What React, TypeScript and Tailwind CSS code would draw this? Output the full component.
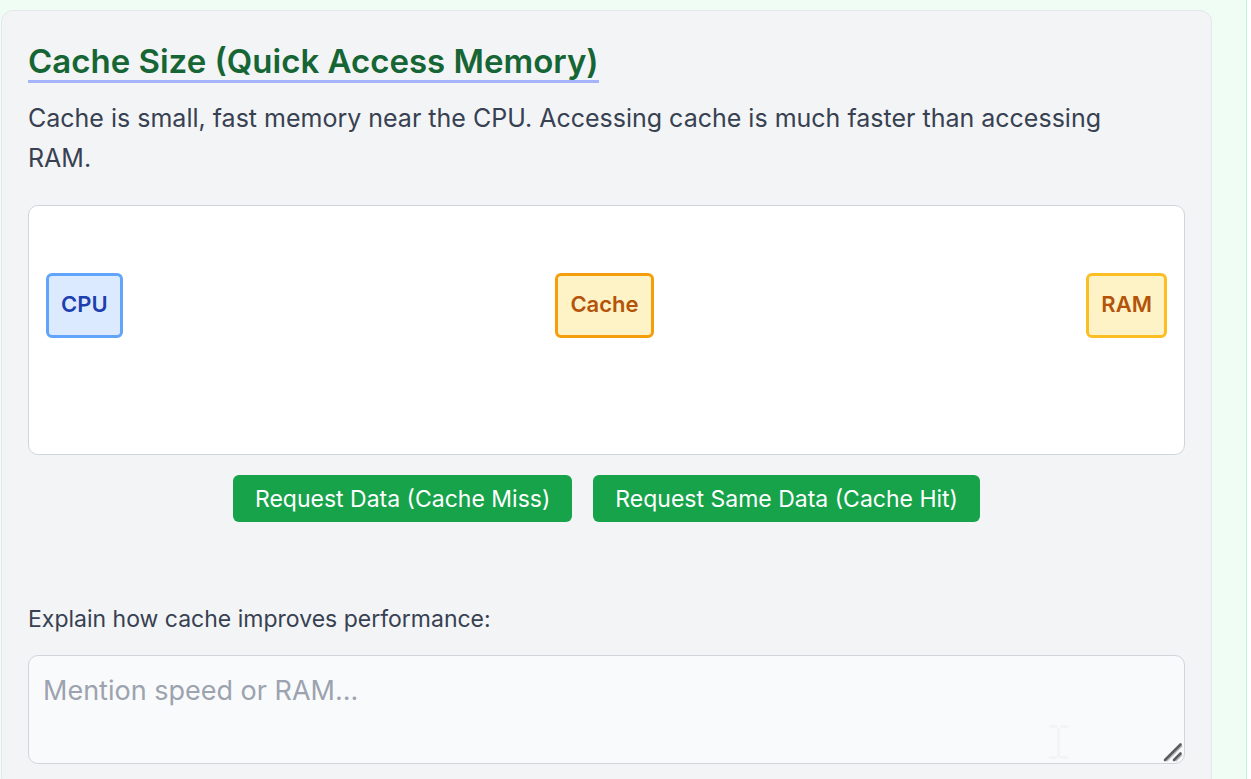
import { useState } from "react";

const boxClass = "flex h-[65px] items-center justify-center rounded-md border-3 px-3 pb-0.5 text-[22px] font-semibold";
const buttonClass = "h-[47px] rounded-md bg-[#16a34a] px-[22px] pt-px text-[23px] font-normal text-white hover:bg-[#15803d]";

export default function App() {
  const [answer, setAnswer] = useState("");
  return (
    <div className="flex h-screen overflow-hidden bg-[#f0fdf4] pl-px font-['Inter',sans-serif]">
      <main className="min-w-0 flex-1 pt-2.5 pr-[34px]">
        <section className="min-h-screen rounded-xl border border-[#e5e7eb] bg-[#f3f4f6] px-[26px] pt-8">
          <h2 className="inline-block border-b-3 border-[#a5b4fc] text-[33px] leading-[37px] font-semibold text-[#166534]">
            Cache Size (Quick Access Memory)
          </h2>
          <p className="mt-[15px] pr-8 text-[25px] leading-10 text-[#374151]">
            Cache is small, fast memory near the CPU. Accessing cache is much faster than accessing RAM.
          </p>
          <div className="mt-[27px] flex h-[250px] items-start justify-between rounded-[10px] border border-[#d1d5db] bg-white px-[17px] pt-[67px]">
            <div className={`${boxClass} border-[#60a5fa] bg-[#dbeafe] text-[#1e40af]`}>CPU</div>
            <div className={`${boxClass} border-[#f59e0b] bg-[#fef3c7] text-[#b45309]`}>Cache</div>
            <div className={`${boxClass} border-[#fbbf24] bg-[#fef3c7] text-[#b45309]`}>RAM</div>
          </div>
          <div className="mt-5 flex justify-center gap-[21px]">
            <button type="button" className={buttonClass}>Request Data (Cache Miss)</button>
            <button type="button" className={buttonClass}>Request Same Data (Cache Hit)</button>
          </div>
          <label htmlFor="answer" className="mt-[79px] block text-[23px] leading-9 text-[#374151]">
            Explain how cache improves performance:
          </label>
          <div className="relative mt-[18px]">
            <textarea
              id="answer"
              value={answer}
              onChange={(e) => setAnswer(e.target.value)}
              placeholder="Mention speed or RAM..."
              className="block h-[109px] w-full resize-none rounded-[10px] border border-[#d1d5db] bg-[#f9fafb] px-3.5 py-[15px] text-[27px] leading-10 text-[#374151] placeholder:text-[#9ca3af]"
            />
            <svg aria-hidden="true" viewBox="0 0 20 34" className="pointer-events-none absolute right-[116px] bottom-[5px] h-[34px] w-5 text-[#f3f4f4]">
              <path d="M0 1.5h8M11 1.5h8M0 32.5h8M11 32.5h8M9.5 3v29" stroke="currentColor" strokeWidth="3" fill="none" />
            </svg>
            <svg aria-hidden="true" viewBox="0 0 20 20" className="pointer-events-none absolute right-0.5 bottom-0.5 size-5">
              <path d="M3.5 19 19 3.5M12.5 19l6.500-6.500" stroke="#c0c0c0" strokeWidth="2" fill="none" />
              <path d="M2 18 17.500 2.500M11 18l6.500-6.500" stroke="#5c5c5c" strokeWidth="2.6" strokeLinecap="round" fill="none" />
            </svg>
          </div>
        </section>
      </main>
      <div className="w-[5px] border-l border-[#bbf7d0] bg-white" />
    </div>
  );
}
